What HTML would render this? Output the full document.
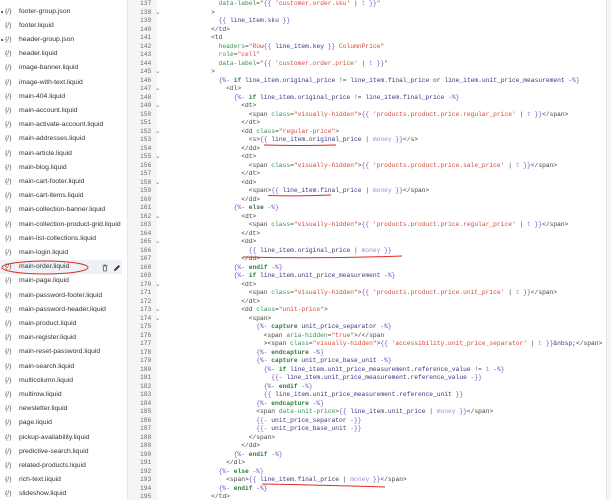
<!DOCTYPE html>
<html><head><meta charset="utf-8"><style>
*{margin:0;padding:0;box-sizing:border-box}
body{width:611px;height:500px;overflow:hidden;background:#fff;position:relative;font-family:"Liberation Sans",sans-serif}
#side{position:absolute;left:0;top:0;width:127px;height:500px;background:#fff}
.it{position:absolute;left:0;width:122px;height:14.2px;line-height:14.2px;font-size:6.8px;color:#333;white-space:nowrap}
.it i{font-style:normal;color:#555;position:absolute;left:5px;font-size:6.8px}
.it span{position:absolute;left:19px}
.dot{position:absolute;left:0.5px;top:6px;width:2.4px;height:2.4px;border-radius:50%;background:#1c3d2e}
#gut{position:absolute;left:127px;top:0;width:30px;height:500px;background:#f4f5f6;border-left:1px solid #e6e7e9}
#nums{position:absolute;left:140px;top:0;font:6.27px/8.5px "Liberation Mono",monospace;color:#6b6b6b;white-space:pre}
#code{position:absolute;left:166px;top:0;font:6.27px/8.5px "Liberation Mono",monospace;color:#444;white-space:pre}
.a{color:#3a8f55}.s{color:#d24b3b}.p{color:#7450c2}.v{color:#3c3582}.k{color:#2c7d3a;font-weight:bold}.f{color:#a08ad8}
#rb{position:absolute;left:606px;top:0;width:5px;height:500px;background:#f6f6f7;border-left:1px solid #e4e4e6}
</style></head><body>
<div id="side">
<div class="it" style="top:4.6px"><b class="dot"></b><i>{/}</i><span>footer-group.json</span></div>
<div class="it" style="top:18.8px"><i>{/}</i><span>footer.liquid</span></div>
<div class="it" style="top:33px"><b class="dot"></b><i>{/}</i><span>header-group.json</span></div>
<div class="it" style="top:47.2px"><i>{/}</i><span>header.liquid</span></div>
<div class="it" style="top:61.4px"><i>{/}</i><span>image-banner.liquid</span></div>
<div class="it" style="top:75.6px"><i>{/}</i><span>image-with-text.liquid</span></div>
<div class="it" style="top:89.8px"><i>{/}</i><span>main-404.liquid</span></div>
<div class="it" style="top:104px"><i>{/}</i><span>main-account.liquid</span></div>
<div class="it" style="top:118.2px"><i>{/}</i><span>main-activate-account.liquid</span></div>
<div class="it" style="top:132.4px"><i>{/}</i><span>main-addresses.liquid</span></div>
<div class="it" style="top:146.6px"><i>{/}</i><span>main-article.liquid</span></div>
<div class="it" style="top:160.8px"><i>{/}</i><span>main-blog.liquid</span></div>
<div class="it" style="top:175px"><i>{/}</i><span>main-cart-footer.liquid</span></div>
<div class="it" style="top:189.2px"><i>{/}</i><span>main-cart-items.liquid</span></div>
<div class="it" style="top:203.4px"><i>{/}</i><span>main-collection-banner.liquid</span></div>
<div class="it" style="top:217.6px"><i>{/}</i><span>main-collection-product-grid.liquid</span></div>
<div class="it" style="top:231.8px"><i>{/}</i><span>main-list-collections.liquid</span></div>
<div class="it" style="top:246px"><i>{/}</i><span>main-login.liquid</span></div>
<div class="it" style="top:260.2px;background:#eef1f5"><i>{/}</i><span>main-order.liquid</span>
<svg style="position:absolute;left:101px;top:3.5px" width="8" height="8" viewBox="0 0 8 8"><path d="M1.5 2h5M3 2V1h2v1M2.2 2.5l.5 4.5h2.6l.5-4.5" fill="none" stroke="#555" stroke-width=".8"/></svg>
<svg style="position:absolute;left:113px;top:3.5px" width="8" height="8" viewBox="0 0 8 8"><path d="M1 7l.4-1.8L5.6 1 7 2.4 2.8 6.6z" fill="#333"/></svg></div>
<div class="it" style="top:274.4px"><i>{/}</i><span>main-page.liquid</span></div>
<div class="it" style="top:288.6px"><i>{/}</i><span>main-password-footer.liquid</span></div>
<div class="it" style="top:302.8px"><i>{/}</i><span>main-password-header.liquid</span></div>
<div class="it" style="top:317px"><i>{/}</i><span>main-product.liquid</span></div>
<div class="it" style="top:331.2px"><i>{/}</i><span>main-register.liquid</span></div>
<div class="it" style="top:345.4px"><i>{/}</i><span>main-reset-password.liquid</span></div>
<div class="it" style="top:359.6px"><i>{/}</i><span>main-search.liquid</span></div>
<div class="it" style="top:373.8px"><i>{/}</i><span>multicolumn.liquid</span></div>
<div class="it" style="top:388px"><i>{/}</i><span>multirow.liquid</span></div>
<div class="it" style="top:402.2px"><i>{/}</i><span>newsletter.liquid</span></div>
<div class="it" style="top:416.4px"><i>{/}</i><span>page.liquid</span></div>
<div class="it" style="top:430.6px"><i>{/}</i><span>pickup-availability.liquid</span></div>
<div class="it" style="top:444.8px"><i>{/}</i><span>predictive-search.liquid</span></div>
<div class="it" style="top:459px"><i>{/}</i><span>related-products.liquid</span></div>
<div class="it" style="top:473.2px"><i>{/}</i><span>rich-text.liquid</span></div>
<div class="it" style="top:487.4px"><i>{/}</i><span>slideshow.liquid</span></div>
</div>
<div id="gut"></div>
<div id="nums">137
138 ⌄
139
140
141
142
143
144
145 ⌄
146
147 ⌄
148
149 ⌄
150
151
152 ⌄
153
154
155 ⌄
156
157
158 ⌄
159
160
161
162 ⌄
163
164
165 ⌄
166
167
168
169
170 ⌄
171
172
173 ⌄
174 ⌄
175
176
177
178
179
180
181
182
183
184
185
186
187
188
189
190
191
192
193
194
195</div>
<div id="code">              <span class="a">data-label</span>=<span class="s">"</span><span class="p">{{</span> <span class="s">'customer.order.sku'</span> | <span class="f">t</span> <span class="p">}}</span><span class="s">"</span>
            &gt;
              <span class="p">{{</span> <span class="v">line_item</span>.<span class="v">sku</span> <span class="p">}}</span>
            &lt;/td&gt;
            &lt;td
              <span class="a">headers</span>=<span class="s">"Row</span><span class="p">{{</span> <span class="v">line_item</span>.<span class="v">key</span> <span class="p">}}</span><span class="s"> ColumnPrice"</span>
              <span class="a">role</span>=<span class="s">"cell"</span>
              <span class="a">data-label</span>=<span class="s">"</span><span class="p">{{</span> <span class="s">'customer.order.price'</span> | <span class="f">t</span> <span class="p">}}</span><span class="s">"</span>
            &gt;
              <span class="p">{%-</span> <span class="k">if</span> <span class="v">line_item</span>.<span class="v">original_price</span> != <span class="v">line_item</span>.<span class="v">final_price</span> <span class="v">or</span> <span class="v">line_item</span>.<span class="v">unit_price_measurement</span> <span class="p">-%}</span>
                &lt;dl&gt;
                  <span class="p">{%-</span> <span class="k">if</span> <span class="v">line_item</span>.<span class="v">original_price</span> != <span class="v">line_item</span>.<span class="v">final_price</span> <span class="p">-%}</span>
                    &lt;dt&gt;
                      &lt;span <span class="a">class</span>=<span class="s">"visually-hidden"</span>&gt;<span class="p">{{</span> <span class="s">'products.product.price.regular_price'</span> | <span class="f">t</span> <span class="p">}}</span>&lt;/span&gt;
                    &lt;/dt&gt;
                    &lt;dd <span class="a">class</span>=<span class="s">"regular-price"</span>&gt;
                      &lt;s&gt;<span class="p">{{</span> <span class="v">line_item</span>.<span class="v">original_price</span> | <span class="f">money</span> <span class="p">}}</span>&lt;/s&gt;
                    &lt;/dd&gt;
                    &lt;dt&gt;
                      &lt;span <span class="a">class</span>=<span class="s">"visually-hidden"</span>&gt;<span class="p">{{</span> <span class="s">'products.product.price.sale_price'</span> | <span class="f">t</span> <span class="p">}}</span>&lt;/span&gt;
                    &lt;/dt&gt;
                    &lt;dd&gt;
                      &lt;span&gt;<span class="p">{{</span> <span class="v">line_item</span>.<span class="v">final_price</span> | <span class="f">money</span> <span class="p">}}</span>&lt;/span&gt;
                    &lt;/dd&gt;
                  <span class="p">{%-</span> <span class="k">else</span> <span class="p">-%}</span>
                    &lt;dt&gt;
                      &lt;span <span class="a">class</span>=<span class="s">"visually-hidden"</span>&gt;<span class="p">{{</span> <span class="s">'products.product.price.regular_price'</span> | <span class="f">t</span> <span class="p">}}</span>&lt;/span&gt;
                    &lt;/dt&gt;
                    &lt;dd&gt;
                      <span class="p">{{</span> <span class="v">line_item</span>.<span class="v">original_price</span> | <span class="f">money</span> <span class="p">}}</span>
                    &lt;/dd&gt;
                  <span class="p">{%-</span> <span class="k">endif</span> <span class="p">-%}</span>
                  <span class="p">{%-</span> <span class="k">if</span> <span class="v">line_item</span>.<span class="v">unit_price_measurement</span> <span class="p">-%}</span>
                    &lt;dt&gt;
                      &lt;span <span class="a">class</span>=<span class="s">"visually-hidden"</span>&gt;<span class="p">{{</span> <span class="s">'products.product.price.unit_price'</span> | <span class="f">t</span> <span class="p">}}</span>&lt;/span&gt;
                    &lt;/dt&gt;
                    &lt;dd <span class="a">class</span>=<span class="s">"unit-price"</span>&gt;
                      &lt;span&gt;
                        <span class="p">{%-</span> <span class="k">capture</span> <span class="v">unit_price_separator</span> <span class="p">-%}</span>
                          &lt;span <span class="a">aria-hidden</span>=<span class="s">"true"</span>&gt;/&lt;/span
                          &gt;&lt;span <span class="a">class</span>=<span class="s">"visually-hidden"</span>&gt;<span class="p">{{</span> <span class="s">'accessibility.unit_price_separator'</span> | <span class="f">t</span> <span class="p">}}</span><span class="v">&amp;nbsp;</span>&lt;/span&gt;
                        <span class="p">{%-</span> <span class="k">endcapture</span> <span class="p">-%}</span>
                        <span class="p">{%-</span> <span class="k">capture</span> <span class="v">unit_price_base_unit</span> <span class="p">-%}</span>
                          <span class="p">{%-</span> <span class="k">if</span> <span class="v">line_item</span>.<span class="v">unit_price_measurement</span>.<span class="v">reference_value</span> != <span class="f">1</span> <span class="p">-%}</span>
                            <span class="p">{{-</span> <span class="v">line_item</span>.<span class="v">unit_price_measurement</span>.<span class="v">reference_value</span> <span class="p">-}}</span>
                          <span class="p">{%-</span> <span class="k">endif</span> <span class="p">-%}</span>
                          <span class="p">{{</span> <span class="v">line_item</span>.<span class="v">unit_price_measurement</span>.<span class="v">reference_unit</span> <span class="p">}}</span>
                        <span class="p">{%-</span> <span class="k">endcapture</span> <span class="p">-%}</span>
                        &lt;span <span class="a">data-unit-price</span>&gt;<span class="p">{{</span> <span class="v">line_item</span>.<span class="v">unit_price</span> | <span class="f">money</span> <span class="p">}}</span>&lt;/span&gt;
                        <span class="p">{{-</span> <span class="v">unit_price_separator</span> <span class="p">-}}</span>
                        <span class="p">{{-</span> <span class="v">unit_price_base_unit</span> <span class="p">-}}</span>
                      &lt;/span&gt;
                    &lt;/dd&gt;
                  <span class="p">{%-</span> <span class="k">endif</span> <span class="p">-%}</span>
                &lt;/dl&gt;
              <span class="p">{%-</span> <span class="k">else</span> <span class="p">-%}</span>
                &lt;span&gt;<span class="p">{{</span> <span class="v">line_item</span>.<span class="v">final_price</span> | <span class="f">money</span> <span class="p">}}</span>&lt;/span&gt;
              <span class="p">{%-</span> <span class="k">endif</span> <span class="p">-%}</span>
            &lt;/td&gt;</div>
<div id="rb"></div>
<svg style="position:absolute;left:0;top:0" width="611" height="500">
<g fill="none" stroke="#e02b20" stroke-width="1">
<ellipse cx="45" cy="267.5" rx="43" ry="6.5"/>
<path d="M264 145 Q300 146 336 145"/>
<path d="M268 195.5 Q300 196.5 331 195"/>
<path d="M243 257 Q320 259 402 256"/>
<path d="M262 484 Q320 485 385 487"/>
</g></svg>
</body></html>
